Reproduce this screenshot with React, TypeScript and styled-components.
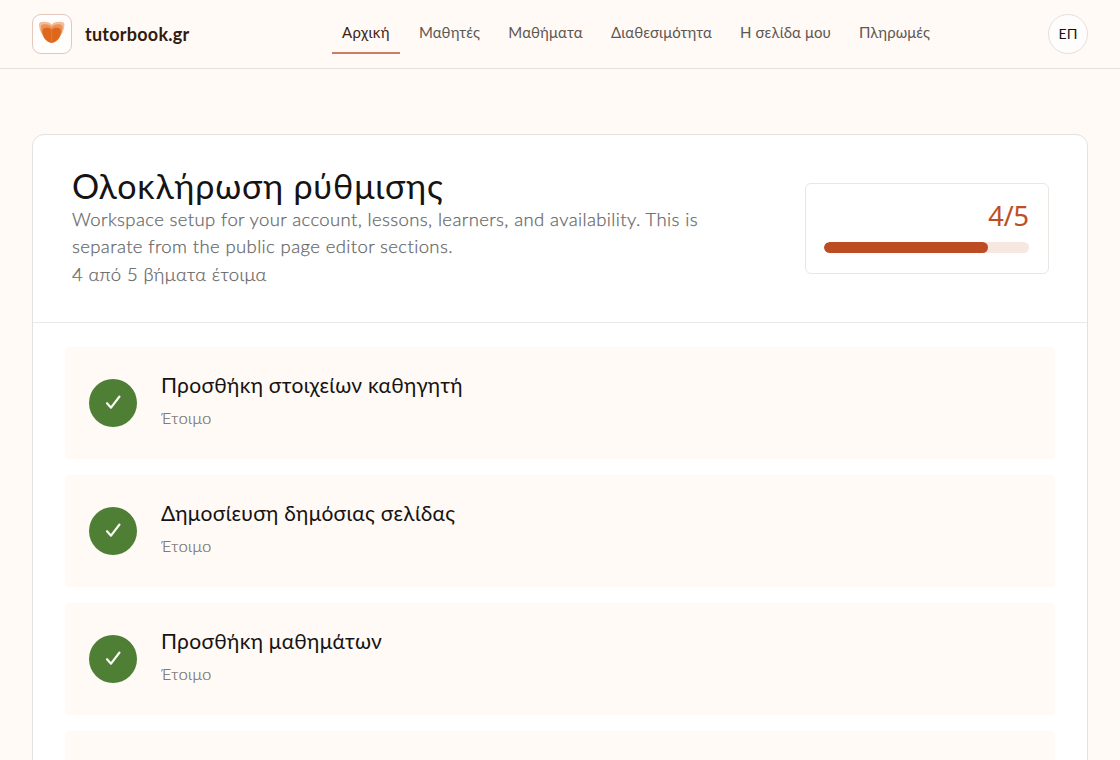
import React from "react";
import styled, { createGlobalStyle } from "styled-components";

const GlobalStyle = createGlobalStyle`
  *, *::before, *::after { box-sizing: border-box; }
  html, body { height: 100%; }
  body {
    margin: 0;
    overflow: hidden;
    background: #fffaf5;
    color: #151313;
    font-family: Lato, "Liberation Sans", sans-serif;
  }
  #root { height: 100%; }
  h1, h2, p { margin: 0; font-weight: 400; }
`;

const Page = styled.div`
  height: 100%;
  overflow: hidden;
`;

const Header = styled.header`
  display: grid;
  grid-template-columns: 300px 1fr 40px;
  align-items: center;
  height: 69px;
  padding: 0 32px;
  border-bottom: 1px solid #e4e0dd;
`;

const Brand = styled.a`
  display: flex;
  align-items: center;
  gap: 13px;
  color: #321b10;
  font-size: 18px;
  font-weight: 700;
  letter-spacing: 0.25px;
`;

const LogoBox = styled.span`
  display: grid;
  place-items: center;
  width: 40px;
  height: 40px;
  border: 1px solid #e3c8be;
  border-radius: 9px;
  background: #fffefd;
`;

const Nav = styled.nav`
  display: flex;
  gap: 9px;
`;

const NavItem = styled.a<{ $width: number; $active?: boolean }>`
  display: flex;
  justify-content: center;
  align-items: center;
  width: ${(p) => p.$width}px;
  height: 40px;
  padding-bottom: 2px;
  border-bottom: 2px solid ${(p) => (p.$active ? "#cf7b61" : "transparent")};
  color: ${(p) => (p.$active ? "#3a2419" : "#5d5753")};
  font-size: 15px;
  letter-spacing: ${(p) => (p.$active ? 0.35 : 0.1)}px;
  white-space: nowrap;
`;

const Avatar = styled.button`
  width: 40px;
  height: 40px;
  padding: 0 0 2px;
  border: 1px solid #e4e0dd;
  border-radius: 50%;
  background: #fffdfb;
  color: #151313;
  font: 400 14px Lato, sans-serif;
`;

const Main = styled.main`
  padding: 65px 32px 0;
`;

const Card = styled.section`
  height: 760px;
  border: 1px solid #e4e2e0;
  border-radius: 12px;
  background: #fff;
`;

const CardHeader = styled.div`
  display: flex;
  justify-content: space-between;
  align-items: center;
  height: 188px;
  padding: 0 38px 0 39px;
  border-bottom: 1px solid #ebe9e8;
`;

const Intro = styled.div`
  width: 640px;
`;

const Title = styled.h1`
  height: 37px;
  font-size: 34px;
  line-height: 34px;
  letter-spacing: 0.85px;
  white-space: nowrap;
`;

const Copy = styled.p`
  color: #686868;
  font-size: 18.5px;
  font-weight: 300;
  line-height: 27.5px;
  letter-spacing: 0.38px;
  -webkit-text-stroke: 0.25px #686868;
`;

const Progress = styled.div`
  display: flex;
  flex-direction: column;
  width: 244px;
  height: 91px;
  padding: 15px 19px 0 18px;
  border: 1px solid #ece6e3;
  border-radius: 6px;
`;

const Score = styled.span`
  height: 43px;
  color: #bd4d24;
  font-family: "Open Sans", sans-serif;
  font-size: 27px;
  line-height: 34px;
  text-align: right;
  -webkit-text-stroke: 0.2px #bd4d24;
`;

const Track = styled.div`
  height: 11px;
  overflow: hidden;
  border-radius: 6px;
  background: #f6e7e1;
`;

const Fill = styled.div`
  height: 100%;
  border-radius: 6px;
  background: #bd4c22;
`;

const Steps = styled.div`
  display: flex;
  flex-direction: column;
  gap: 16px;
  padding: 24px 32px;
`;

const Step = styled.article`
  display: flex;
  align-items: center;
  gap: 24px;
  height: 112px;
  flex-shrink: 0;
  padding: 0 24px;
  border-radius: 4px;
  background: #fffaf5;
`;

const CheckBadge = styled.span`
  display: grid;
  place-items: center;
  width: 48px;
  height: 48px;
  border-radius: 50%;
  background: #4e7f35;
`;

const StepText = styled.div`
  padding-bottom: 6px;
`;

const StepTitle = styled.h2`
  font-size: 21px;
  line-height: 30px;
  letter-spacing: 0.3px;
`;

const StepStatus = styled.p`
  margin-top: 6px;
  color: #706c68;
  font-size: 16px;
  font-weight: 300;
  line-height: 24px;
  letter-spacing: 0.5px;
  -webkit-text-stroke: 0.2px #706c68;
`;

const Logo = () => (
  <svg width="38" height="38" viewBox="33 15 38 38" aria-hidden="true">
    <path d="M51.7 24.5C49.5 22 45.5 21.5 41.5 22Q38.8 22.4 39 25C39.5 33 44 39 51.7 40C59.4 39 63.9 33 64.4 25Q64.6 22.4 61.9 22C57.9 21.5 53.9 22 51.7 24.5Z" fill="#f2bd98" />
    <path d="M51.7 27C49.5 24.5 46.5 24 43.3 24.4Q40.6 24.8 40.8 27.5C41.3 35 45 41 51.7 42C58.4 41 62.1 35 62.6 27.5Q62.8 24.8 60.1 24.4C56.9 24 53.9 24.5 51.7 27Z" fill="#ea9259" />
    <path d="M51.7 29.8C49.8 27.9 47.5 27.6 44.8 28Q42.3 28.4 42.4 31C42.8 37 45.5 42 51.7 43C57.9 42 60.6 37 61 31Q61.1 28.4 58.6 28C55.9 27.6 53.6 27.9 51.7 29.8Z" fill="#df671c" />
    <path d="M51.7 28.5V42" stroke="#ee8a4b" strokeWidth="0.5" />
  </svg>
);

const Check = () => (
  <svg width="20" height="20" viewBox="0 0 20 20" fill="none" aria-hidden="true">
    <path d="M4 10.2L8 14.7L16.5 3.5" stroke="#fffdf8" strokeWidth="2.1" strokeLinecap="round" strokeLinejoin="round" />
  </svg>
);

const navItems = [
  { label: "Αρχική", width: 68 },
  { label: "Μαθητές", width: 81 },
  { label: "Μαθήματα", width: 93 },
  { label: "Διαθεσιμότητα", width: 121 },
  { label: "Η σελίδα μου", width: 109 },
  { label: "Πληρωμές", width: 91 },
];

const steps = [
  "Προσθήκη στοιχείων καθηγητή",
  "Δημοσίευση δημόσιας σελίδας",
  "Προσθήκη μαθημάτων",
];

export default function App() {
  const done = 4;
  const total = 5;
  return (
    <Page>
      <GlobalStyle />
      <Header>
        <Brand>
          <LogoBox><Logo /></LogoBox>
          tutorbook.gr
        </Brand>
        <Nav>
          {navItems.map((item, i) => (
            <NavItem key={item.label} $width={item.width} $active={i === 0}>{item.label}</NavItem>
          ))}
        </Nav>
        <Avatar>ΕΠ</Avatar>
      </Header>
      <Main>
        <Card>
          <CardHeader>
            <Intro>
              <Title>Ολοκλήρωση ρύθμισης</Title>
              <Copy>Workspace setup for your account, lessons, learners, and availability. This is separate from the public page editor sections.</Copy>
              <Copy>4 από 5 βήματα έτοιμα</Copy>
            </Intro>
            <Progress>
              <Score>{done}/{total}</Score>
              <Track><Fill style={{ width: `${(done / total) * 100}%` }} /></Track>
            </Progress>
          </CardHeader>
          <Steps>
            {steps.map((step) => (
              <Step key={step}>
                <CheckBadge><Check /></CheckBadge>
                <StepText>
                  <StepTitle>{step}</StepTitle>
                  <StepStatus>Έτοιμο</StepStatus>
                </StepText>
              </Step>
            ))}
            <Step />
          </Steps>
        </Card>
      </Main>
    </Page>
  );
}
